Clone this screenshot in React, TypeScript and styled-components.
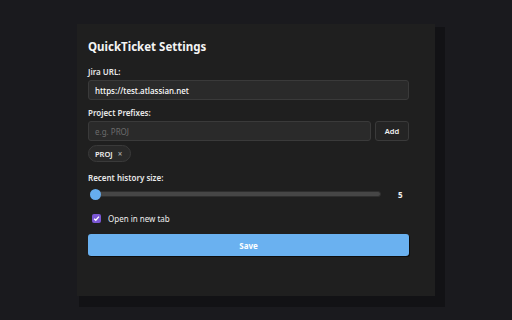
import React, { useState } from 'react'
import styled, { createGlobalStyle } from 'styled-components'

const Global = createGlobalStyle`
  html, body {
    margin: 0;
    padding: 0;
    background: #1a1a1e;
    font-family: "Noto Sans", "Open Sans", sans-serif;
    color: #f2f2f2;
  }
`

const Page = styled.div`
  height: 320px;
  display: flex;
  align-items: center;
  justify-content: center;
`

const Card = styled.div`
  width: 358px;
  height: 272px;
  box-sizing: border-box;
  padding: 15px 26px 0 11px;
  background: #1f1f1f;
  box-shadow: 6px 7px 0 4px #121215;
  display: flex;
  flex-direction: column;
`

const Title = styled.h1`
  margin: 0 0 12px;
  font-size: 11.5px;
  font-weight: 700;
  color: #f4f4f4;
  line-height: 16px;
`

const Label = styled.label`
  display: block;
  font-size: 8px;
  font-weight: 600;
  line-height: 10px;
  margin-bottom: 3px;
  color: #e8e8e8;
`

const Field = styled.div<{ $gap?: number }>`
  margin-bottom: ${(p) => p.$gap ?? 8}px;
`

const Input = styled.input`
  display: block;
  box-sizing: border-box;
  width: 100%;
  height: 20px;
  padding: 0 6px;
  background: #2a2a2a;
  border: 1px solid #3a3a3a;
  border-radius: 3px;
  color: #ffffff;
  font-family: inherit;
  font-size: 8px;
  font-weight: 500;
  outline: none;
  &::placeholder {
    color: #6c6c6c;
    font-weight: 400;
  }
`

const Row = styled.div`
  display: flex;
  gap: 4px;
`

const AddButton = styled.button`
  flex: none;
  width: 34px;
  height: 20px;
  padding: 0;
  background: #242424;
  border: 1px solid #3a3a3a;
  border-radius: 3px;
  color: #f0f0f0;
  font-family: inherit;
  font-size: 7.5px;
  font-weight: 600;
`

const Chips = styled.div`
  display: flex;
  gap: 4px;
  margin-top: 4px;
`

const Chip = styled.span`
  display: inline-flex;
  align-items: center;
  gap: 5px;
  height: 17px;
  box-sizing: border-box;
  padding: 0 8px 0 6px;
  background: #292929;
  border: 1px solid #3a3a3a;
  border-radius: 9px;
  font-size: 7.5px;
  font-weight: 600;
  color: #f0f0f0;
`

const ChipClose = styled.span`
  font-size: 8px;
  color: #a0a0a0;
`

const SliderRow = styled.div`
  display: flex;
  align-items: center;
  height: 14px;
  margin-top: 4px;
`

const Track = styled.div`
  position: relative;
  flex: none;
  width: 291px;
  margin-left: 2px;
  height: 6px;
  border-radius: 3px;
  background: #464646;
  border: 1px solid #2e2e2e;
  box-sizing: border-box;
`

const Thumb = styled.div`
  position: absolute;
  left: -1px;
  top: 50%;
  width: 11px;
  height: 11px;
  margin-top: -5.5px;
  border-radius: 50%;
  background: #66adef;
`

const Value = styled.span`
  margin-left: 17px;
  font-size: 8px;
  font-weight: 700;
`

const CheckRow = styled.label`
  display: flex;
  align-items: center;
  gap: 7px;
  height: 14px;
  margin: 10px 0 9px 4px;
  font-size: 8px;
  color: #eeeeee;
`

const Box = styled.span`
  width: 9px;
  height: 9px;
  border-radius: 2px;
  background: #7b57d4;
  display: flex;
  align-items: center;
  justify-content: center;
`

const SaveButton = styled.button`
  display: block;
  width: 100%;
  height: 22px;
  background: #6ab1f0;
  border: none;
  border-radius: 3px;
  box-shadow: 1px 1px 0 #0d0d0d;
  color: #ffffff;
  font-family: inherit;
  font-size: 8px;
  font-weight: 700;
`

export default function App() {
  const [url, setUrl] = useState('https://test.atlassian.net')
  const [prefix, setPrefix] = useState('')
  const [prefixes] = useState(['PROJ'])

  return (
    <Page>
      <Global />
      <Card>
        <Title>QuickTicket Settings</Title>
        <Field>
          <Label>Jira URL:</Label>
          <Input value={url} onChange={(e) => setUrl(e.target.value)} />
        </Field>
        <Field $gap={11}>
          <Label>Project Prefixes:</Label>
          <Row>
            <Input placeholder="e.g. PROJ" value={prefix} onChange={(e) => setPrefix(e.target.value)} />
            <AddButton>Add</AddButton>
          </Row>
          <Chips>
            {prefixes.map((p) => (
              <Chip key={p}>
                {p}
                <ChipClose>×</ChipClose>
              </Chip>
            ))}
          </Chips>
        </Field>
        <Field $gap={0}>
          <Label>Recent history size:</Label>
          <SliderRow>
            <Track>
              <Thumb />
            </Track>
            <Value>5</Value>
          </SliderRow>
        </Field>
        <CheckRow>
          <Box>
            <svg width="7" height="7" viewBox="0 0 8 8">
              <path d="M1.3 4.2 L3.2 6 L6.8 1.8" fill="none" stroke="#fff" strokeWidth="1.5" />
            </svg>
          </Box>
          Open in new tab
        </CheckRow>
        <SaveButton>Save</SaveButton>
      </Card>
    </Page>
  )
}
